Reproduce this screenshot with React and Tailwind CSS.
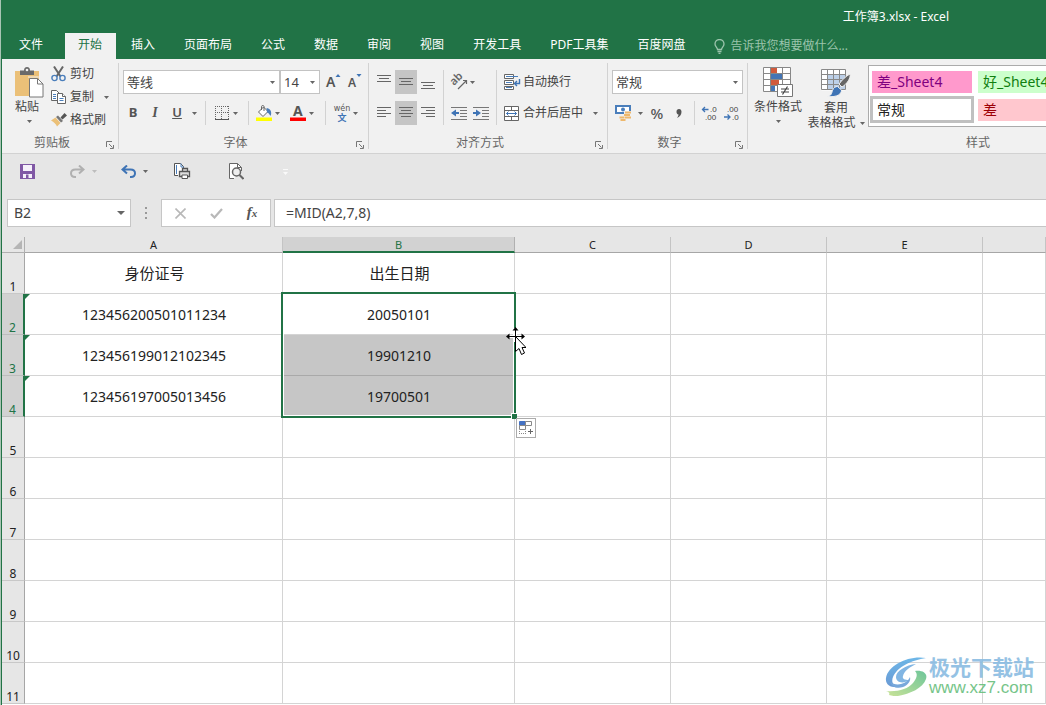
import React from 'react';

const CJK = "font-['Noto_Sans','Noto_Sans_CJK_SC',sans-serif]";

function Caret({ className = 'text-[#666]' }) {
  return (
    <svg width="5" height="3" viewBox="0 0 5 3" className={className} fill="currentColor" aria-hidden="true">
      <path d="M0 0h5L2.500 3z" />
    </svg>
  );
}

function CaretButton({ label, className = 'text-[#666]', start = false }) {
  return (
    <button
      type="button"
      aria-label={label}
      className={`flex h-6 w-3 shrink-0 items-center ${start ? 'justify-start' : 'justify-center'}`}
    >
      <Caret className={className} />
    </button>
  );
}

function Tool({ label, children, active = false }) {
  return (
    <button
      type="button"
      aria-label={label}
      className={`flex h-6 w-[22px] shrink-0 items-center justify-center text-[#555] ${active ? 'bg-[#c5c5c5]' : ''}`}
    >
      {children}
    </button>
  );
}

function Sep({ className = 'mx-[5px]' }) {
  return <span className={`w-px shrink-0 self-stretch bg-[#d2d2d2] ${className}`} />;
}

function Group({ title, launcher = true, className = '', children }) {
  return (
    <section aria-label={title} className={`flex shrink-0 flex-col pt-1 ${className}`}>
      <div className="flex h-[70px] items-start">{children}</div>
      <div className="relative flex h-5 items-center justify-center text-xs leading-5 text-[#666]">
        <span className="pr-4">{title}</span>
        {launcher && (
          <button type="button" aria-label={`${title}设置`} className="absolute right-1 bottom-1">
            <svg width="8" height="8" viewBox="0 0 8 8" fill="none" stroke="#777">
              <path d="M.5 6V.5H6M3 3l3.500 3.500M7.500 4v3.500H4" />
            </svg>
          </button>
        )}
      </div>
    </section>
  );
}

function Divider() {
  return <span className="my-1 w-px shrink-0 bg-[#d2d2d2]" />;
}

function Combo({ label, value, className }) {
  return (
    <span className={`relative flex h-6 shrink-0 items-center ${className}`}>
      <select
        aria-label={label}
        defaultValue={value}
        className="h-6 w-full appearance-none border border-[#c3c3c3] bg-white pl-[3px] text-[13px] leading-5 text-[#444]"
      >
        <option>{value}</option>
      </select>
      <Caret className="pointer-events-none absolute right-[5px] text-[#666]" />
    </span>
  );
}

function Lines({ rows }) {
  return (
    <svg width="14" height="14" viewBox="0 0 14 14" stroke="#666" aria-hidden="true">
      {rows.map(([x1, x2, y]) => (
        <path key={y} d={`M${x1} ${y}H${x2}`} />
      ))}
    </svg>
  );
}

const full = [0, 14];
const mid = [2, 12];
const vTop = [[...full, 0.5], [...mid, 3.5], [...full, 6.5]];
const vMid = [[...full, 3.5], [...mid, 6.5], [...full, 9.5]];
const vBot = [[...full, 7.5], [...mid, 10.5], [...full, 13.5]];
const hLeft = [[...full, 1.5], [0, 9, 4.5], [...full, 7.5], [0, 9, 10.5]];
const hMid = [[...full, 1.5], [...mid, 4.5], [...full, 7.5], [...mid, 10.5]];
const hRight = [[...full, 1.5], [5, 14, 4.5], [...full, 7.5], [5, 14, 10.5]];

function PasteIcon() {
  return (
    <svg width="29" height="31" viewBox="0 0 29 31" fill="none">
      <path d="M0 4h24v25H0z" fill="#ebc078" />
      <path d="M5 3.500h4C9 1.500 10 0 12 0s3 1.500 3 3.500h4V8H5z" fill="#6a6a6a" />
      <circle cx="12" cy="3" r="1.300" fill="#f1f1f1" />
      <path d="M13 10h10.500l5.500 5v2" stroke="#f1f1f1" />
      <path d="M14.500 11.500h8l5.500 5.500v13H14.500z" fill="#fff" stroke="#777" />
      <path d="M22.500 11.500V17H28" stroke="#777" />
    </svg>
  );
}

function CutIcon() {
  return (
    <svg width="15" height="16" viewBox="0 0 15 16" fill="none">
      <path d="M3 .5l6.500 10M12 .5L5.500 10.500" stroke="#666" strokeWidth="2" />
      <circle cx="3.500" cy="12" r="2.600" stroke="#4a7ebb" strokeWidth="1.400" />
      <circle cx="11.500" cy="12" r="2.600" stroke="#4a7ebb" strokeWidth="1.400" />
    </svg>
  );
}

function CopyIcon() {
  return (
    <svg width="15" height="14" viewBox="0 0 15 14" fill="#fff" stroke="#666">
      <path d="M.5.500h5l2.500 2.500v7.500H.5z" />
      <path d="M2 4.500h3M2 6.500h3M2 8.500h3" stroke="#4a7ebb" />
      <path d="M6.500 3.500h5l3 3v7h-8z" />
      <path d="M11.500 3.500v3h3" />
      <path d="M8.500 8.500h4M8.500 10.500h4" stroke="#4a7ebb" />
    </svg>
  );
}

function BrushIcon() {
  return (
    <svg width="16" height="14" viewBox="0 0 16 14">
      <path d="M0 7.500l4.500-3 5 5.500L6 13.500C5 11 3 9 0 7.500z" fill="#ebc078" />
      <path d="M5 4l2-1.500 5 5.500-2 1.500z" fill="#777" />
      <path d="M9.500 4.500L13.500 0 16 2.500l-4.500 4z" fill="#555" />
    </svg>
  );
}

function Borders() {
  return (
    <svg width="14" height="14" viewBox="0 0 14 14" stroke="#666" strokeDasharray="1 1">
      <path d="M0 .5h14M0 6.500h14M.5 0v13M6.500 0v13M13.500 0v13" />
      <path d="M0 13.500h14" stroke="#555" strokeDasharray="none" />
    </svg>
  );
}

function FillIcon() {
  return (
    <svg width="16" height="16" viewBox="0 0 16 16" fill="none">
      <path d="M7.500 2L2.500 7l4.500 4.500 5-5z" fill="#fff" stroke="#666" />
      <path d="M5.500 5V1.500c0-1.300 2.500-1.300 2.500 0V6" stroke="#666" />
      <path d="M10.500 3c3.500.5 6 3.500 4 8-1-1.500-1.500-3-3.500-3.500z" fill="#4a7ebb" />
      <path d="M0 12.500h16V16H0z" fill="#ff0" />
    </svg>
  );
}

function Orientation() {
  return (
    <svg width="17" height="15" viewBox="0 0 17 15" fill="none" className="overflow-visible">
      <text x="3" y="11" fontSize="11" fontWeight="600" fontFamily="Noto Sans" fill="#666" transform="rotate(-45 3 11)">ab</text>
      <path d="M7 14L15.500 5.500M12 5.500h3.500V9" stroke="#666" strokeWidth="1.200" />
    </svg>
  );
}

function Indent({ flip = false }) {
  return (
    <svg width="16" height="13" viewBox="0 0 16 13">
      <path d="M0 .5h16M9 3.500h7M9 6.500h7M9 9.500h7M0 12.500h16" stroke="#777" />
      <path d={flip ? 'M0 5h3V2.500l5 3.500-5 3.500V7H0z' : 'M8 5H5V2.500L0 6l5 3.500V7h3z'} fill="#3f74b5" />
    </svg>
  );
}

function WrapIcon() {
  return (
    <svg width="17" height="16" viewBox="0 0 17 16" fill="none" stroke="#666">
      <path d="M.5.500h9v4h-9zM.5 6.500h9v4h-9zM.5 12.500h9v3h-9z" fill="#fff" />
      <path d="M2 2.500h12M2 8.500h6M2 13.500h6" stroke="#4a7ebb" />
      <path d="M15.500 5v4.500H11M13 7l-2.500 2.500L13 12" stroke="#3f74b5" strokeWidth="1.400" />
    </svg>
  );
}

function MergeIcon() {
  return (
    <svg width="15" height="15" viewBox="0 0 15 15" fill="none" stroke="#666">
      <path d="M.5.500h14v14H.5zM.5 4.500h14M.5 10.500h14M7.500.500v4M7.500 10.500v4" fill="#fff" />
      <path d="M2.500 7.500h10M4.500 5.500l-2 2 2 2M10.500 5.500l2 2-2 2" stroke="#3f74b5" />
    </svg>
  );
}

function CurrencyIcon() {
  return (
    <svg width="17" height="16" viewBox="0 0 17 16" fill="none">
      <path d="M1 1h14v7H1z" fill="#fff" stroke="#4a7ebb" strokeWidth="2" />
      <circle cx="8" cy="4.500" r="2" fill="#4a7ebb" />
      <path d="M9 6h8v10H9zM4 10h6v6H4z" fill="#f1f1f1" />
      <path d="M10 7.500h6M9 10h6M10 12.500h6M4.500 12.500h5M5.500 15h5" stroke="#eeb86c" strokeWidth="1.800" />
    </svg>
  );
}

function Decimal({ more = false }) {
  return (
    <svg width="16" height="15" viewBox="0 0 16 15" className="overflow-visible" fontFamily="Liberation Sans" fontSize="8" fill="#444">
      <text x={more ? 8 : 3} y="6">{more ? '.0' : '.00'}</text>
      <text x={more ? 3 : 8} y="14">{more ? '.00' : '.0'}</text>
      <path
        d={more ? 'M6.500 3.500h-6M3 1L.5 3.500 3 6' : 'M0 11h6M3.500 8.500L6 11l-2.500 2.500'}
        fill="none"
        stroke="#3f74b5"
        strokeWidth="1.300"
      />
    </svg>
  );
}

function ConditionalIcon() {
  return (
    <svg width="30" height="30" viewBox="0 0 30 30" fill="none">
      <path d="M.5.500h27v24H.5z" fill="#fff" />
      <path d="M8 1h6v5H8zM8 13h8v5H8z" fill="#d05a3c" />
      <path d="M8 7h11v5H8zM8 19h4v5H8z" fill="#4475b5" />
      <path d="M.5.500h27v24H.5zM.5 6.500h27M.5 12.500h27M.5 18.500h27M7.500.500v24M19.500.500v24" stroke="#888" />
      <path d="M14.500 17.500h15v12h-15z" fill="#fff" stroke="#777" />
      <path d="M18 22h8M18 25h8M24.500 19.500l-5 8" stroke="#444" strokeWidth="1.200" />
    </svg>
  );
}

function TableFormatIcon() {
  return (
    <svg width="30" height="29" viewBox="0 0 30 29" fill="none">
      <path d="M.5.500h24v21H.5z" fill="#fff" />
      <path d="M7 6h17v15H7z" fill="#bdd0e8" />
      <path d="M.5.500h24v20H.5zM.5 5.500h24M.5 10.500h24M.5 15.500h24M6.500.500v20M12.500.500v20M18.500.500v20" stroke="#888" />
      <path d="M29 5c1 4-3 10-8 13l-3-3c3-4 7-8 11-10z" fill="#666" stroke="#f1f1f1" />
      <path d="M16.500 17.500l4 3.500c0 4-4 7.500-14 6.500 4-1 4-3 5-6 1-3 3-4 5-4z" fill="#3f74b5" stroke="#f1f1f1" />
    </svg>
  );
}

const TABS = ['文件', '开始', '插入', '页面布局', '公式', '数据', '审阅', '视图', '开发工具', 'PDF工具集', '百度网盘'];

function TitleBar() {
  return (
    <header className="shrink-0 bg-[#217346] text-xs text-white">
      <div className="flex h-[33px] items-center justify-end pr-[97px]">
        <h1 className="leading-5">工作簿3.xlsx - Excel</h1>
      </div>
      <nav aria-label="功能区选项卡" className="flex h-[26px] items-stretch gap-0.5 pl-1 leading-4 whitespace-nowrap">
        {TABS.map((tab, i) => (
          <button
            key={tab}
            type="button"
            className={`shrink-0 pr-[14px] pb-0.5 pl-[13px] ${i === 0 ? 'mr-1.5' : ''} ${
              i === 1 ? 'bg-[#f1f1f1] text-[#217346]' : 'text-white'
            }`}
          >
            {tab}
          </button>
        ))}
        <button type="button" className="flex shrink-0 items-center gap-[5px] pl-[13px] text-[#9bc4ac]">
          <svg width="11" height="15" viewBox="0 0 11 15" fill="none" stroke="currentColor" strokeWidth="1.300">
            <path d="M3.500 10.500C3.500 8.500 1 7.500 1 5a4.500 4.500 0 019 0c0 2.500-2.500 3.500-2.500 5.500zM3.500 12.500h4M4.500 14.300h2" />
          </svg>
          告诉我您想要做什么...
        </button>
      </nav>
    </header>
  );
}

function ClipboardGroup() {
  return (
    <Group title="剪贴板" className="w-[116px]">
      <button type="button" className="ml-3 flex w-[30px] flex-col items-center pt-1 text-xs leading-[18px] text-[#444]">
        <PasteIcon />
        <span className="pr-1">粘贴</span>
        <Caret className="mt-1 text-[#666]" />
      </button>
      <div className="ml-[5px] flex flex-col gap-px text-xs text-[#444]">
        <button type="button" className="flex h-[22px] items-center gap-1 pl-0.5">
          <CutIcon />
          剪切
        </button>
        <span className="flex h-[22px] items-center">
          <button type="button" className="flex items-center gap-1 pl-0.5">
            <CopyIcon />
            复制
          </button>
          <span className="ml-1.5">
            <CaretButton label="复制选项" />
          </span>
        </span>
        <button type="button" className="flex h-[22px] items-center gap-[3px] pl-0.5">
          <BrushIcon />
          格式刷
        </button>
      </div>
    </Group>
  );
}

function FontGroup() {
  return (
    <Group title="字体" className="w-[249px]">
      <div className="flex flex-col gap-[7px] pt-[7px] pl-[3px]">
        <div className="flex items-center">
          <Combo label="字体" value="等线" className="ml-px w-[157px]" />
          <Combo label="字号" value="14" className="w-10" />
          <span className="flex pl-0.5">
            <Tool label="增大字号">
              <svg width="15" height="16" viewBox="0 0 15 16" fill="#555" className="overflow-visible">
                <text x="0" y="13" fontSize="14" fontWeight="600" fontFamily="Noto Sans">A</text>
                <path d="M9.500 3L12 0l2.500 3z" fill="#3f74b5" />
              </svg>
            </Tool>
            <Tool label="减小字号">
              <svg width="14" height="16" viewBox="0 0 14 16" fill="#555" className="overflow-visible">
                <text x="0" y="13" fontSize="12" fontWeight="600" fontFamily="Noto Sans">A</text>
                <path d="M8.500 0h5L11 3z" fill="#3f74b5" />
              </svg>
            </Tool>
          </span>
        </div>
        <div className="flex items-center">
          <Tool label="加粗"><b className="text-[13px]">B</b></Tool>
          <Tool label="倾斜"><span className="font-['Liberation_Serif',serif] text-sm font-bold italic">I</span></Tool>
          <Tool label="下划线"><span className="text-[13px] font-semibold underline">U</span></Tool>
          <CaretButton label="下划线选项" />
          <Sep />
          <Tool label="边框"><Borders /></Tool>
          <CaretButton label="边框选项" start />
          <Sep className="mr-1 ml-[3px]" />
          <Tool label="填充颜色"><FillIcon /></Tool>
          <CaretButton label="填充颜色选项" start />
          <Tool label="字体颜色">
            <svg width="16" height="16" viewBox="0 0 16 16" className="overflow-visible">
              <text x="3" y="11" fontSize="14" fontWeight="700" fontFamily="Noto Sans" fill="#555">A</text>
              <path d="M0 12.500h16V16H0z" fill="#f00" />
            </svg>
          </Tool>
          <CaretButton label="字体颜色选项" start />
          <Sep className="mr-[5px] ml-1" />
          <Tool label="拼音">
            <span className="flex flex-col items-center text-[9px] leading-[9px]">
              <span className="font-['DejaVu_Sans',sans-serif] text-[8px] leading-[8px]">wén</span>
              <b className="text-[#3f74b5]">文</b>
            </span>
          </Tool>
          <CaretButton label="拼音选项" start />
        </div>
      </div>
    </Group>
  );
}

function AlignGroup() {
  return (
    <Group title="对齐方式" className="w-[238px]">
      <div className="flex pt-[7px] pl-1">
        <div className="grid grid-cols-3 gap-y-[7px]">
          <Tool label="顶端对齐"><Lines rows={vTop} /></Tool>
          <Tool label="垂直居中" active><Lines rows={vMid} /></Tool>
          <Tool label="底端对齐"><Lines rows={vBot} /></Tool>
          <Tool label="左对齐"><Lines rows={hLeft} /></Tool>
          <Tool label="居中" active><Lines rows={hMid} /></Tool>
          <Tool label="右对齐"><Lines rows={hRight} /></Tool>
        </div>
        <Sep className="mx-1" />
        <div className="grid grid-cols-2 gap-y-[7px]">
          <Tool label="方向"><Orientation /></Tool>
          <CaretButton label="方向选项" start />
          <Tool label="减少缩进量"><Indent /></Tool>
          <Tool label="增加缩进量"><Indent flip /></Tool>
        </div>
        <Sep className="mx-1" />
        <div className="flex flex-col gap-[7px] pl-[3px] text-xs text-[#444]">
          <button type="button" className="flex h-6 items-center gap-0.5">
            <WrapIcon />
            自动换行
          </button>
          <span className="flex h-6 items-center">
            <button type="button" className="flex items-center gap-1">
              <MergeIcon />
              合并后居中
            </button>
            <span className="ml-1.5">
              <CaretButton label="合并选项" />
            </span>
          </span>
        </div>
      </div>
    </Group>
  );
}

function NumberGroup() {
  return (
    <Group title="数字" className="w-[139px]">
      <div className="flex flex-col gap-[7px] pt-[7px] pl-1">
        <Combo label="数字格式" value="常规" className="w-[131px]" />
        <div className="flex items-center">
          <Tool label="会计数字格式"><CurrencyIcon /></Tool>
          <CaretButton label="会计数字格式选项" />
          <Tool label="百分比样式"><span className="text-[15px] font-medium">%</span></Tool>
          <Tool label="千位分隔样式">
            <svg width="6" height="9" viewBox="0 0 6 9" fill="#555">
              <path d="M3 0c2 0 2.500 1.500 2.500 3C5.500 6 3.500 8 1 9c1-1.500 1.500-2.500 1.500-3.500C1 5.500.5 4 .5 2.800.5 1 1.500 0 3 0z" />
            </svg>
          </Tool>
          <Sep className="mx-1" />
          <Tool label="增加小数位数"><Decimal more /></Tool>
          <Tool label="减少小数位数"><Decimal /></Tool>
        </div>
      </div>
    </Group>
  );
}

function StyleGroup() {
  return (
    <Group title="样式" launcher={false} className="w-[476px]">
      <button type="button" className="ml-1 flex w-[52px] flex-col items-center pt-1 text-xs leading-5 text-[#444]">
        <ConditionalIcon />
        <span className="whitespace-nowrap">条件格式</span>
        <Caret className="mt-[3px] text-[#666]" />
      </button>
      <button type="button" className="flex w-16 flex-col items-center pt-1.5 text-xs leading-4 text-[#444]">
        <TableFormatIcon />
        <span className="pt-0.5">套用</span>
        <span className="flex items-center gap-1 leading-[14px] whitespace-nowrap">
          表格格式
          <Caret />
        </span>
      </button>
      <div className="mt-0.5 grid h-[62px] flex-1 grid-cols-[104px_104px] content-start gap-x-0.5 gap-y-px border border-[#ababab] bg-white px-px pt-[3px] text-sm">
        <button type="button" className="m-0.5 h-[22px] bg-[#ff99cc] pl-[5px] text-left leading-[22px] text-[#800080]">差_Sheet4</button>
        <button type="button" className="m-0.5 h-[22px] bg-[#ccffcc] pl-[5px] text-left leading-[22px] text-[#108010]">好_Sheet4</button>
        <button type="button" className="h-[27px] border-[3px] border-[#c0c0c0] bg-white pl-1 text-left leading-[21px] text-[#222]">常规</button>
        <button type="button" className="mx-0.5 mt-[3px] h-[22px] bg-[#ffc7ce] pl-[5px] text-left leading-[22px] text-[#9c0006]">差</button>
      </div>
    </Group>
  );
}

function QuickAccess() {
  return (
    <div role="toolbar" aria-label="快速访问工具栏" className="flex h-[35px] shrink-0 items-center pl-[14px] text-[#666]">
      <Tool label="保存">
        <svg width="15" height="15" viewBox="0 0 15 15">
          <path d="M0 0h15v15H0z" fill="#8058a5" />
          <path d="M3 1h9v6H3zM3 10h9v4H3z" fill="#f5f0fa" />
          <path d="M6 10.500h2.500V14H6z" fill="#8058a5" />
        </svg>
      </Tool>
      <span className="ml-7 flex">
        <Tool label="恢复">
          <svg width="15" height="13" viewBox="0 0 15 13" fill="none" stroke="#b0b0b0" strokeWidth="2">
            <path d="M9 .5L13.500 4.500 9 8.500M13 4.500H5.500C2.500 4.500 1 6.300 1 8.300c0 2.200 1.500 3.700 4 3.700h1" />
          </svg>
        </Tool>
        <CaretButton label="恢复选项" className="text-[#bdbdbd]" />
      </span>
      <span className="ml-[17px] flex">
        <Tool label="撤消">
          <svg width="15" height="13" viewBox="0 0 15 13" fill="none" stroke="#3f74b5" strokeWidth="2">
            <path d="M6 .5L1.500 4.500 6 8.500M2 4.500h7.500c3 0 4.500 1.800 4.500 3.800 0 2.200-1.500 3.700-4 3.700H9" />
          </svg>
        </Tool>
        <CaretButton label="撤消选项" />
      </span>
      <span className="ml-5 flex">
        <Tool label="快速打印">
          <svg width="17" height="17" viewBox="0 0 17 17" fill="none" stroke="#555">
            <path d="M4 12.500H.5V.500h6l3 3v2" fill="#fff" />
            <path d="M7 .5v3.500h3M2.500 2v9" stroke="#4a7ebb" />
            <path d="M8.500 5.500h5v3h-5zM5.500 8.500h10v5h-10z" fill="#ddd" strokeWidth="1.300" />
            <path d="M8 12h5.500v3.500H8z" fill="#fff" />
          </svg>
        </Tool>
      </span>
      <span className="ml-8 flex">
        <Tool label="打印预览">
          <svg width="15" height="17" viewBox="0 0 15 17" fill="none" stroke="#666">
            <path d="M5 15.500H.5V.500h8l4 4V8" fill="#fff" />
            <path d="M8.500.500v4h4" />
            <circle cx="7.500" cy="9" r="4" fill="#eee" strokeWidth="1.500" />
            <path d="M10.500 12l4 4" strokeWidth="2" />
          </svg>
        </Tool>
      </span>
      <span className="ml-8 flex">
        <button type="button" aria-label="自定义快速访问工具栏" className="flex h-6 w-3 items-center justify-center">
          <svg width="5" height="6" viewBox="0 0 5 6" fill="#fafafa"><path d="M0 0h5v1H0zM0 3h5L2.500 6z" /></svg>
        </button>
      </span>
    </div>
  );
}

function FormulaBar() {
  return (
    <div className="mt-2.5 flex h-7 shrink-0 pl-[5px] text-sm text-[#444]">
      <span className="relative flex items-center">
        <input
          aria-label="名称框"
          defaultValue="B2"
          className="h-7 w-[124px] border border-[#c6c6c6] bg-white pb-0.5 pl-1.5 leading-5"
        />
        <svg width="8" height="4" viewBox="0 0 8 4" fill="#666" className="pointer-events-none absolute right-1.5"><path d="M0 0h8L4 4z" /></svg>
      </span>
      <span className="flex w-[30px] items-center justify-center">
        <svg width="2" height="12" viewBox="0 0 2 12" fill="#999"><path d="M0 0h2v2H0zM0 5h2v2H0zM0 10h2v2H0z" /></svg>
      </span>
      <span className="flex w-[110px] items-center justify-between border border-[#c6c6c6] bg-white px-[7px]">
        <Tool label="取消">
          <svg width="11" height="11" viewBox="0 0 11 11" stroke="#b8b8b8" strokeWidth="1.600"><path d="M.5.500l10 10M10.500.500l-10 10" /></svg>
        </Tool>
        <Tool label="输入">
          <svg width="13" height="11" viewBox="0 0 13 11" fill="none" stroke="#b8b8b8" strokeWidth="2.200"><path d="M1 6l3.500 3.500L12 1" /></svg>
        </Tool>
        <Tool label="插入函数">
          <i className="font-['Liberation_Serif',serif] text-[15px] font-bold">f<span className="text-[11px]">x</span></i>
        </Tool>
      </span>
      <input
        aria-label="编辑栏"
        defaultValue="=MID(A2,7,8)"
        className="ml-[3px] h-7 min-w-0 flex-1 border border-r-0 border-[#c6c6c6] bg-white pb-0.5 pl-[11px] leading-5"
      />
    </div>
  );
}

function MoveCursor() {
  return (
    <svg width="20" height="30" viewBox="0 0 20 30" className="absolute top-[33px] -right-3 z-10" aria-hidden="true">
      <path d="M9.500 1v14M1 9.500h16" stroke="#fff" strokeWidth="3" />
      <path d="M9.500 0l3 3.500h-6zM0 9.500L3.500 6.500v6zM19 9.500L15.500 6.500v6z" fill="#000" />
      <path d="M9.500 3v12M3 9.500h13" stroke="#000" />
      <path d="M9.500 9.500v15l3.500-3 2.500 6 3-1.500-2.500-5.500h4z" fill="#fff" stroke="#000" />
    </svg>
  );
}

function Selection() {
  return (
    <>
      <span className="pointer-events-none absolute -top-0.5 -left-0.5 z-10 h-[126px] w-[235px] border-2 border-[#217346]">
        <span className="block h-full border-r border-b border-l border-white" />
      </span>
      <span className="absolute top-[119px] -right-[3px] z-10 h-1.5 w-1.5 border-t border-l border-white bg-[#217346]" />
      <MoveCursor />
      <button
        type="button"
        aria-label="自动填充选项"
        className="absolute top-[124px] -right-[22px] z-10 flex h-5 w-5 items-center justify-center border border-[#ababab] bg-white"
      >
        <svg width="15" height="14" viewBox="0 0 15 14" fill="none" stroke="#888">
          <path d="M.5.500h6v4h-6z" fill="#4472c4" stroke="#4472c4" />
          <path d="M6.500.500h6v4h-6zM.5 4.500h6v4h-6z" fill="#fff" />
          <path d="M0 12.500h7M0 10.500h1M6 10.500h1" strokeDasharray="1 1" />
          <path d="M9 10.500h5M11.500 8v5" stroke="#666" />
        </svg>
      </button>
    </>
  );
}

const ROWS = [
  ['身份证号', '出生日期'],
  ['123456200501011234', '20050101'],
  ['123456199012102345', '19901210'],
  ['123456197005013456', '19700501'],
  [], [], [], [], [], [], [],
];

const COLS = ['A', 'B', 'C', 'D', 'E', ''];

function Sheet() {
  return (
    <main className="relative mt-2.5 min-h-0 flex-1 overflow-hidden bg-white">
      <table className="w-full table-fixed border-separate border-spacing-0 text-center text-[#222]">
        <colgroup>
          <col className="w-[23px]" />
          <col className="w-[258px]" />
          <col className="w-[232px]" />
          <col className="w-[156px]" />
          <col className="w-[156px]" />
          <col className="w-[156px]" />
          <col />
        </colgroup>
        <thead>
          <tr className="h-4 bg-[#e6e6e6] text-[11px]">
            <th aria-label="全选" className="border-r border-b border-[#b0b0b0] p-0">
              <svg width="9" height="9" viewBox="0 0 9 9" className="ml-[11px]" fill="#b5b5b5"><path d="M9 0v9H0z" /></svg>
            </th>
            {COLS.map((c) => (
              <th
                key={c}
                scope="col"
                className={`p-0 font-normal ${
                  c === 'B'
                    ? 'border-r border-b-2 border-r-[#b0b0b0] border-b-[#217346] bg-[#d2d2d2] pt-px leading-[13px] text-[#217346]'
                    : 'border-r border-b border-r-[#c4c4c4] border-b-[#a6a6a6] leading-[15px]'
                }`}
              >
                {c}
              </th>
            ))}
          </tr>
        </thead>
        <tbody>
          {ROWS.map((row, r) => {
            const picked = r >= 1 && r <= 3;
            return (
              <tr key={r} className="h-[41px]">
                <th
                  scope="row"
                  className={`border-b p-0 align-bottom text-xs leading-[13px] font-normal ${
                    picked
                      ? 'border-r-2 border-r-[#217346] border-b-[#bdbdbd] bg-[#d2d2d2] text-[#217346]'
                      : 'border-r border-r-[#a6a6a6] border-b-[#c8c8c8] bg-[#e6e6e6]'
                  }`}
                >
                  {r + 1}
                </th>
                {COLS.map((c, i) => (
                  <td
                    key={c}
                    className={`relative border-r border-b px-0 pb-0 ${r === 0 ? 'pt-px pl-0.5 text-[15px]' : 'pt-0.5 pl-px text-sm'} ${
                      i === 1 && (r === 2 || r === 3) ? 'border-[#a9a9a9] bg-[#c6c6c6]' : 'border-[#d4d4d4]'
                    }`}
                  >
                    {i === 0 && picked && (
                      <svg width="5" height="5" viewBox="0 0 5 5" className="absolute top-0 left-0" fill="#217346"><path d="M0 0h5L0 5z" /></svg>
                    )}
                    {row[i]}
                    {i === 1 && r === 1 && <Selection />}
                  </td>
                ))}
              </tr>
            );
          })}
        </tbody>
      </table>
      <Watermark />
    </main>
  );
}

function Watermark() {
  return (
    <div className="absolute right-3 bottom-[7px] flex items-center gap-0.5 opacity-90">
      <svg width="42" height="40" viewBox="0 0 42 40" fill="none">
        <defs>
          <linearGradient id="swoosh" x1="0" y1="0" x2="0" y2="1">
            <stop offset="0" stopColor="#5fb0e6" />
            <stop offset="1" stopColor="#5a8fd0" />
          </linearGradient>
          <linearGradient id="leaf" x1="1" y1="0" x2="0" y2="1">
            <stop offset="0" stopColor="#5fc090" />
            <stop offset="1" stopColor="#c4e08c" />
          </linearGradient>
        </defs>
        <path d="M41 1C24-2 3 8 1 21c-1 7 5 10 13 9-6-1-8-5-6-10C12 10 27 3 41 1z" fill="url(#swoosh)" />
        <path d="M31 7C21 8 11 14 11 20c0 6 8 7 13 3-4 0-7-1-6-4 1-5 7-9 13-12z" fill="#74aee0" />
        <path d="M25 20c-1 3-5 6-9 7-4 1-8 0-11-2 2 5 7 7 13 5 5-2 8-6 7-10z" fill="#6a9fd8" />
        <path d="M30 14c7-1 13 2 11 8-3 9-16 15-28 17-3 0-6 0-9-1 1-2 0-3-3-4 12 1 22-2 27-8 4-5 5-9 2-12z" fill="url(#leaf)" />
      </svg>
      <div className="flex flex-col items-start">
        <span className="text-[21px] leading-[22px] font-bold text-[#8abce2]">极光下载站</span>
        <span className="font-['Liberation_Sans',sans-serif] text-[17px] leading-5 text-[#68be7c]">www.xz7.com</span>
      </div>
    </div>
  );
}

export default function App() {
  return (
    <div className={`flex h-screen flex-col overflow-hidden border-l border-[#a9c4b4] bg-[#e6e6e6] ${CJK}`}>
      <div className="flex min-h-0 flex-1 flex-col border-l border-[#217346]">
        <TitleBar />
        <div role="toolbar" aria-label="功能区" className="flex h-[95px] shrink-0 overflow-hidden border-b border-[#d2d2d2] bg-[#f1f1f1]">
          <ClipboardGroup />
          <Divider />
          <FontGroup />
          <Divider />
          <AlignGroup />
          <Divider />
          <NumberGroup />
          <Divider />
          <StyleGroup />
        </div>
        <QuickAccess />
        <FormulaBar />
        <Sheet />
      </div>
    </div>
  );
}
